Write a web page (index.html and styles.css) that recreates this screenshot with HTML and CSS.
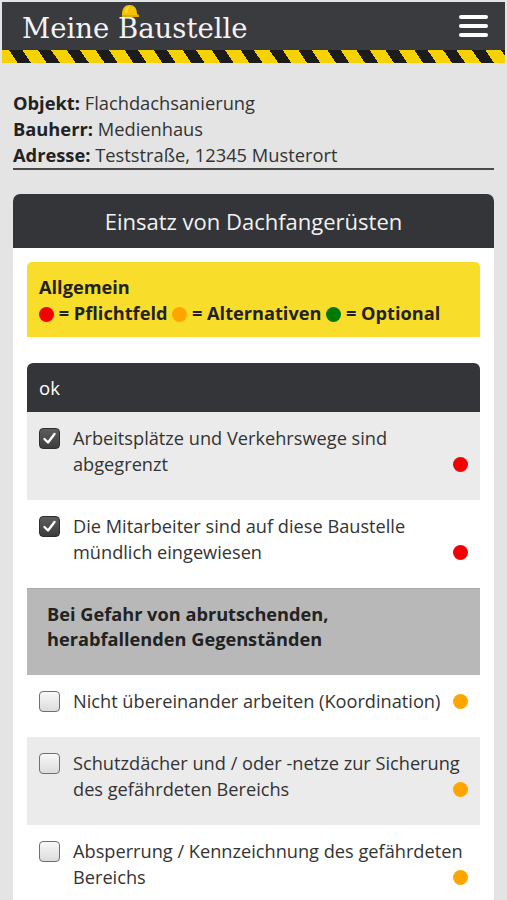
FILE: index.html
```html
<!DOCTYPE html>
<html lang="de">
<head>
  <meta charset="UTF-8">
  <meta name="viewport" content="width=device-width, initial-scale=1.0">
  <title>Meine Baustelle</title>
  <link rel="stylesheet" href="styles.css">
</head>
<body>
  <header class="topbar">
    <div class="topbar-inner">
      <h1 class="brand">Meine <span class="brand-b">B<svg class="hat" width="20" height="14" viewBox="0 0 20 14"><path d="M2 11 C2 4 5 1 9.5 1 C14 1 17 4 17 10 L19 11 L19 13 L2 13 Z" fill="#f5c400"/><path d="M5 9 C5 5 7 2.5 10 2.2 C8 4 7.5 6 7.5 9 Z" fill="#ffd93a"/><rect x="2" y="11" width="17" height="2" fill="#e0a800"/></svg></span>austelle</h1>
      <button class="menu" aria-label="Menü">
        <span></span><span></span><span></span>
      </button>
    </div>
    <div class="stripe"></div>
  </header>

  <main class="page">
    <div class="info">
      <p><strong>Objekt:</strong> Flachdachsanierung</p>
      <p><strong>Bauherr:</strong> Medienhaus</p>
      <p><strong>Adresse:</strong> Teststraße, 12345 Musterort</p>
    </div>

    <section class="card">
      <h2 class="card-title">Einsatz von Dachfangerüsten</h2>
      <div class="card-body">
        <div class="legend">
          <p><strong>Allgemein</strong></p>
          <p><strong><span class="dot red"></span> = Pflichtfeld <span class="dot orange"></span> = Alternativen <span class="dot green"></span> = Optional</strong></p>
        </div>

        <div class="list">
          <div class="list-head">ok</div>

          <label class="row alt">
            <span class="box checked"><svg width="15" height="15" viewBox="0 0 15 15"><path d="M2.5 8 L6 11.5 L12.5 3" fill="none" stroke="#fff" stroke-width="2.4" stroke-linecap="round" stroke-linejoin="round"/></svg></span>
            <span class="text">Arbeitsplätze und Verkehrswege sind abgegrenzt<span class="dot red"></span></span>
          </label>

          <label class="row">
            <span class="box checked"><svg width="15" height="15" viewBox="0 0 15 15"><path d="M2.5 8 L6 11.5 L12.5 3" fill="none" stroke="#fff" stroke-width="2.4" stroke-linecap="round" stroke-linejoin="round"/></svg></span>
            <span class="text">Die Mitarbeiter sind auf diese Baustelle mündlich eingewiesen<span class="dot red"></span></span>
          </label>

          <div class="group">Bei Gefahr von abrutschenden, herabfallenden Gegenständen</div>

          <label class="row">
            <span class="box"></span>
            <span class="text">Nicht übereinander arbeiten (Koordination)<span class="dot orange"></span></span>
          </label>

          <label class="row alt">
            <span class="box"></span>
            <span class="text">Schutzdächer und / oder -netze zur Sicherung des gefährdeten Bereichs<span class="dot orange"></span></span>
          </label>

          <label class="row">
            <span class="box"></span>
            <span class="text">Absperrung / Kennzeichnung des gefährdeten Bereichs<span class="dot orange"></span></span>
          </label>
        </div>
      </div>
    </section>
  </main>
</body>
</html>
```

FILE: styles.css
```css
body {
  margin: 0;
  font-family: "Open Sans", Arial, sans-serif;
  background-color: #e4e4e4;
  color: #333;
}
p {
  margin: 0;
}
.topbar {
  margin: 2px 2px 0;
}
.topbar-inner {
  background-color: #3a3b3f;
  height: 48px;
  display: flex;
  align-items: center;
  justify-content: space-between;
  padding: 0 17px 0 20px;
}
.brand {
  margin: 0;
  font-family: "DejaVu Serif", "Liberation Serif", serif;
  font-weight: normal;
  font-size: 27.5px;
  color: #f4f4f4;
  padding-top: 3px;
}
.brand-b {
  position: relative;
}
.hat {
  position: absolute;
  left: 2px;
  top: -8px;
}
.menu {
  background: none;
  border: none;
  padding: 0;
  width: 29px;
  display: flex;
  flex-direction: column;
  gap: 5px;
  cursor: pointer;
}
.menu span {
  display: block;
  height: 4px;
  border-radius: 2px;
  background-color: #fff;
}
.stripe {
  height: 13px;
  background: repeating-linear-gradient(56deg, #f6d300 0 13px, #1c1c1c 13px 24px);
}
.page {
  padding: 0 13px;
}
.info {
  padding-top: 27px;
  font-size: 18.3px;
  line-height: 26px;
  color: #333;
  border-bottom: 2px solid #4a4a4a;
}
.info strong {
  color: #222;
}
.card {
  margin-top: 24px;
  background-color: #fff;
  border-radius: 7px 7px 0 0;
}
.card-title {
  margin: 0;
  background-color: #333539;
  color: #f2f2f2;
  font-weight: normal;
  font-size: 22px;
  line-height: 54px;
  text-align: center;
  border-radius: 7px 7px 0 0;
}
.card-body {
  padding: 14px 14px 0;
}
.legend {
  background-color: #f8dd2b;
  border-radius: 5px 5px 0 0;
  padding: 12px 12px 11px;
  font-size: 18.2px;
  line-height: 26px;
  color: #222;
}
.dot {
  display: inline-block;
  width: 15px;
  height: 15px;
  border-radius: 50%;
  vertical-align: -2px;
}
.red {
  background-color: #f50000;
}
.orange {
  background-color: #ffa500;
}
.green {
  background-color: #007a00;
}
.list {
  margin-top: 26px;
}
.list-head {
  background-color: #333539;
  color: #fff;
  font-size: 18.5px;
  line-height: 49px;
  padding-left: 12px;
  border-radius: 6px 6px 0 0;
}
.row {
  display: flex;
  gap: 13px;
  padding: 13px 12px 23px;
  font-size: 18.2px;
  line-height: 26px;
  color: #333;
}
.row.alt {
  background-color: #ebebeb;
}
.row .text {
  flex: 1;
}
.row .dot {
  float: right;
  margin-top: 6px;
  vertical-align: 0;
}
.box {
  flex: none;
  width: 19px;
  height: 19px;
  margin-top: 3px;
  border: 1px solid #6f6f6f;
  border-radius: 4px;
  background: linear-gradient(#f8f8f8, #dcdcdc);
  display: flex;
  align-items: center;
  justify-content: center;
}
.box.checked {
  background: linear-gradient(#5d5d5d, #3c3c3c);
  border-color: #2e2e2e;
}
.group {
  background-color: #b8b8b8;
  border-top: 1px solid #a8a8a8;
  color: #222;
  font-weight: bold;
  font-size: 18.2px;
  line-height: 25px;
  padding: 13px 120px 23px 20px;
}
```
